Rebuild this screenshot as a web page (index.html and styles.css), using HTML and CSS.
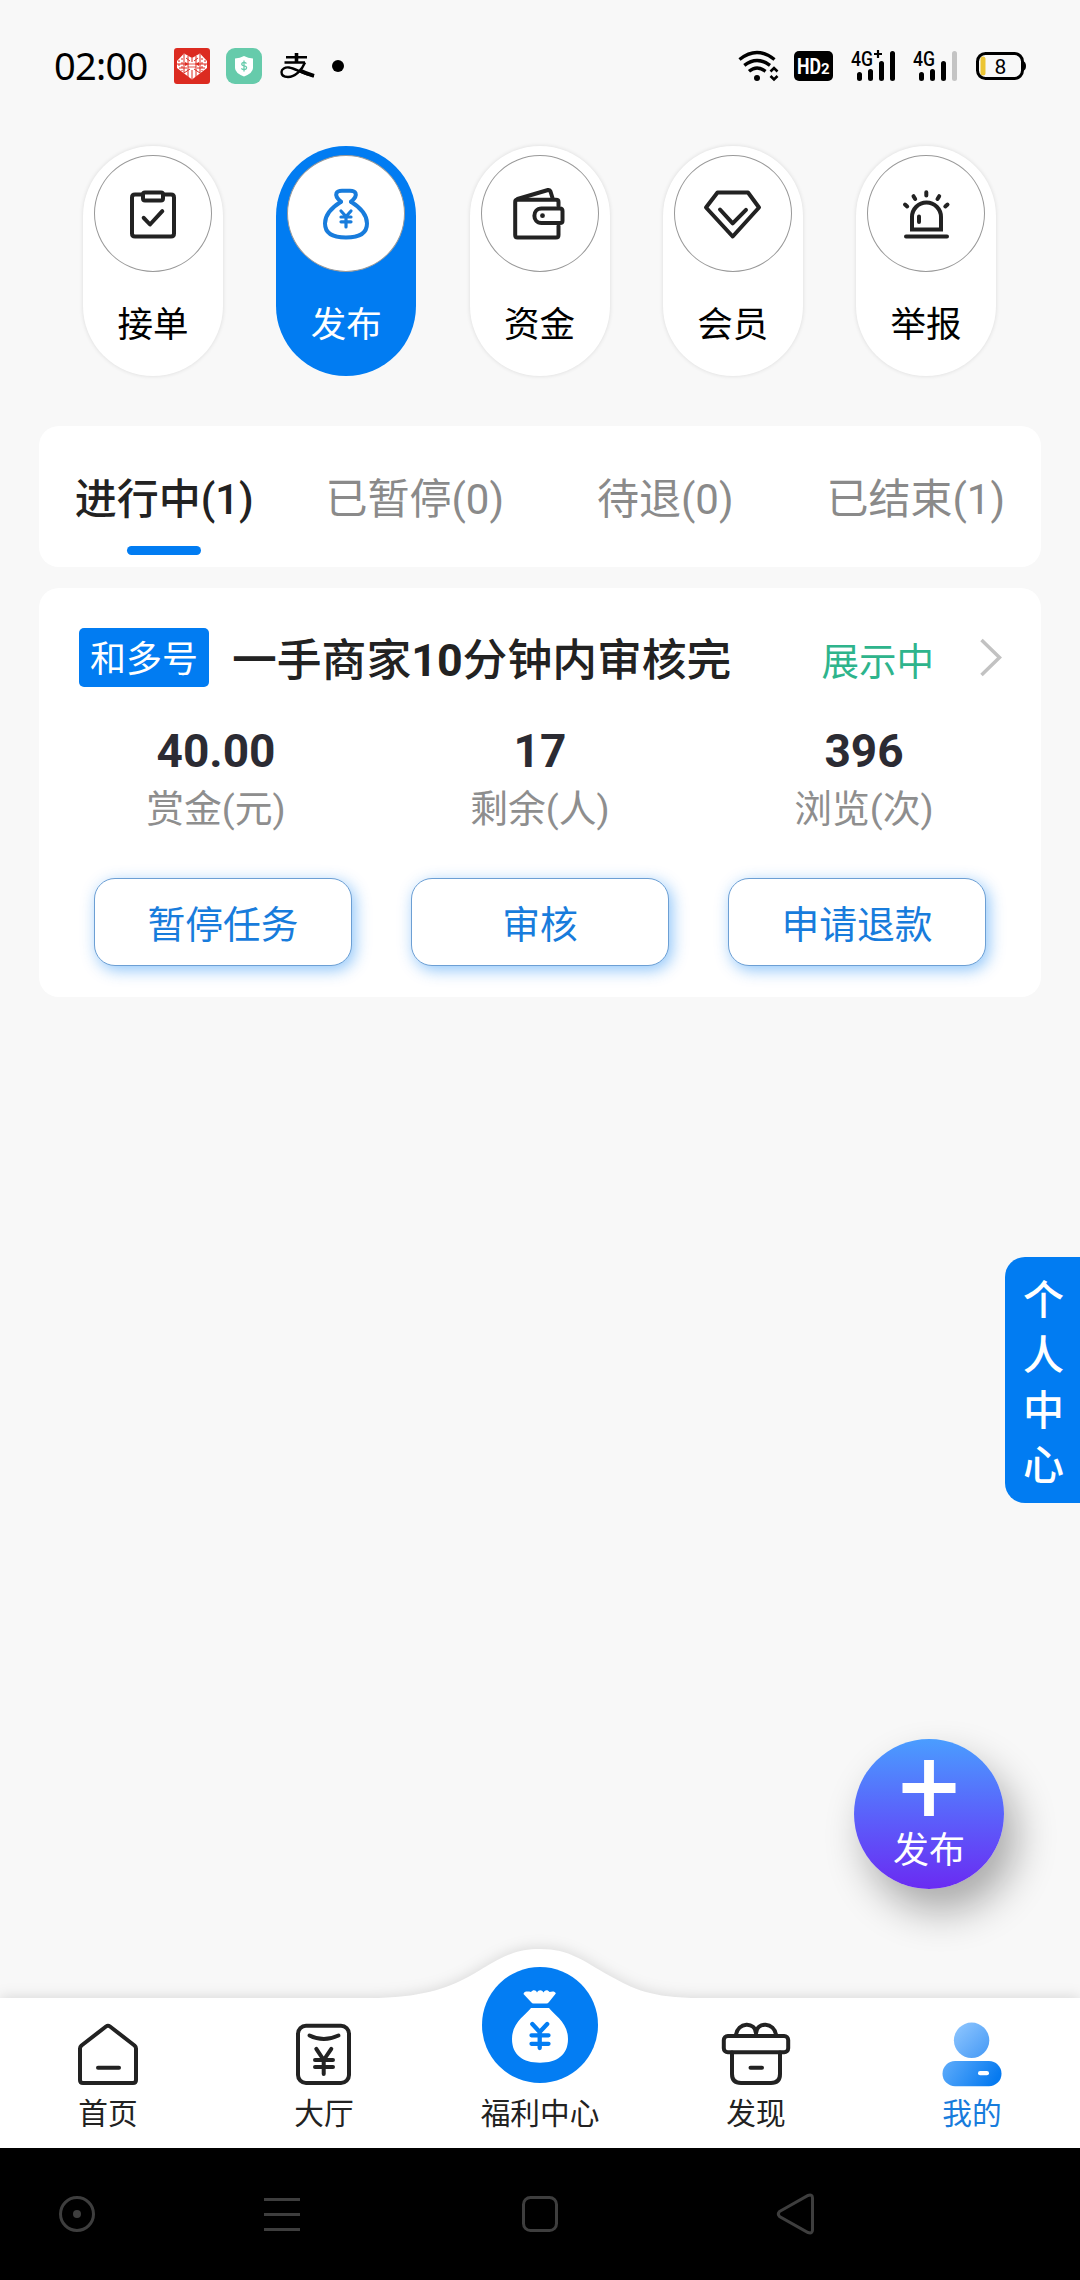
FILE: index.html
```html
<!DOCTYPE html>
<html lang="zh-CN">
<head>
<meta charset="utf-8">
<title>我的发布</title>
<link rel="stylesheet" href="styles.css">
</head>
<body>
<div class="screen">
  <header class="status">
    <span class="clock">02:00</span>
    <svg class="app-red" width="36" height="36" viewBox="0 0 36 36">
      <rect width="36" height="36" rx="3" fill="#dc2b21"/>
      <path d="M3 13L10 5.500L18 10L26 5.500L33 13V20L18 31.500L3 20Z" fill="#fff"/>
      <g stroke="#dc2b21" fill="none">
        <path d="M10 6V25M14 8V29M22 8V29M26 6V25M18 10V14M18 22V31" stroke-width="1"/>
        <path d="M5 12V20M31 12V20M8 10V23M28 10V23" stroke-width="1" stroke-dasharray="2 2"/>
        <path d="M3 16H12M24 16H33M5 20H13M23 20H31M10 25L16 21M26 25L20 21M12 10L16 13M24 10L20 13" stroke-width="1"/>
        <path d="M14 16H22M14 19H22" stroke-width=".8"/>
      </g>
      <path d="M11 14l4 2-4 2zM25 14l-4 2 4 2z" fill="#dc2b21"/>
    </svg>
    <svg class="app-green" width="36" height="36" viewBox="0 0 36 36">
      <rect width="36" height="36" rx="9" fill="#66cbab"/>
      <path d="M9 10.500Q14 10 18 8Q22 10 27 10.500V20Q27 25 18 28.500Q9 25 9 20Z" fill="#fff"/>
      <path d="M20.500 15.500Q18 13.500 16 15.200Q15 17.300 18 17.800Q21.500 18.500 20.300 20.800Q18 22.500 15.300 20.500M18 12.500V23.500" fill="none" stroke="#66cbab" stroke-width="1.300"/>
    </svg>
    <svg class="app-pay" width="36" height="32" viewBox="0 0 36 32" fill="none" stroke="#000">
      <path d="M6 7.300H27M4.500 12.500H25" stroke-width="2.500"/>
      <path d="M16.500 3V12.500" stroke-width="3.600"/>
      <path d="M25 12.500C22 20 15 27 8 27C3 27 1.500 24.500 1.500 22C1.500 19 5 17 9 17.500C16 18.500 22 24 34 25.800" stroke-width="2.400"/>
      <path d="M20 20.500Q26 23.500 34 25.800" stroke-width="4"/>
    </svg>
    <span class="dot"></span>
    <svg class="wifi" width="42" height="32" viewBox="0 0 42 32" fill="none" stroke="#000">
      <path d="M1.500 9.500Q19 -4.500 36.500 9.500" stroke-width="3.400"/>
      <path d="M6.300 15.300Q19 5.500 32 15.300M11 21.300Q19 14.500 27.500 21.300" stroke-width="3.400"/>
      <circle cx="19" cy="28" r="3" fill="#000" stroke="none"/>
      <path d="M32.500 21.500L36 18L39.500 21.500M32.500 26L36 29.500L39.500 26" stroke-width="2.600"/>
    </svg>
    <svg class="hd" width="40" height="32" viewBox="0 0 40 32">
      <rect y="1" width="39" height="30" rx="5"/>
      <text x="3" y="24" font-size="22" textLength="24" lengthAdjust="spacingAndGlyphs">HD</text>
      <text x="27" y="24" font-size="15">2</text>
    </svg>
    <svg class="signal" width="46" height="44" viewBox="0 -6 46 44">
      <text x="0" y="15.500" textLength="22" lengthAdjust="spacingAndGlyphs">4G</text>
      <path d="M23 4H31M27 0V8" stroke="#000" stroke-width="2.200"/>
      <path d="M8.500 24.500V28.500M19.500 21.500V28.500M30.500 13.500V28.500M41.500 3.500V28.500" stroke="#000" stroke-width="5" stroke-linecap="round"/>
    </svg>
    <svg class="signal signal-2" width="46" height="44" viewBox="0 -6 46 44">
      <text x="0" y="15.500" textLength="22" lengthAdjust="spacingAndGlyphs">4G</text>
      <path d="M8.500 24.500V28.500M19.500 21.500V28.500M30.500 13.500V28.500" stroke="#000" stroke-width="5" stroke-linecap="round"/>
      <path d="M41.500 3.500V28.500" stroke="#c4c4c4" stroke-width="5" stroke-linecap="round"/>
    </svg>
    <svg class="battery" width="50" height="32" viewBox="0 0 50 32">
      <rect x="1.500" y="3.500" width="45" height="25" rx="8" fill="none" stroke="#000" stroke-width="3"/>
      <path d="M47 11Q50 12 50 16Q50 20 47 21Z"/>
      <rect x="4.500" y="6.500" width="5" height="19" rx="2.500" fill="#ecc534"/>
      <text x="24.500" y="23.500" text-anchor="middle">8</text>
    </svg>
  </header>

  <nav class="pills">
    <a class="pill">
      <span class="pill-icon"><svg class="icon" width="60" height="60" viewBox="0 0 60 60">
        <path d="M19 10.500H12Q9 10.500 9 13.500V49.500Q9 52.500 12 52.500H48Q51 52.500 51 49.500V13.500Q51 10.500 48 10.500H41"/>
        <rect x="20" y="8.500" width="20" height="8" rx="2"/>
        <path d="M20.700 33.800L27 40.500L39.300 27.200"/></svg></span>
      <span class="pill-text">接单</span>
    </a>
    <a class="pill active">
      <span class="pill-icon"><svg class="icon" width="60" height="60" viewBox="0 0 60 60">
        <path d="M25 17.800C15 24 9 32 9 39.500C9 49 17 53.500 30 53.500C43 53.500 51 49 51 39.500C51 32 45 24 35 17.800"/>
        <path d="M25 17.800C21 14.500 19.500 11.500 20.500 9Q21.500 6.700 26 6.700H34Q38.500 6.700 39.500 9C40.500 11.500 39 14.500 35 17.800"/>
        <path d="M25 27L30 32.500L35 27M30 32.500V43M25 33H35M25 37.800H35" stroke-width="3.200"/></svg></span>
      <span class="pill-text">发布</span>
    </a>
    <a class="pill">
      <span class="pill-icon"><svg class="icon" width="60" height="60" viewBox="0 0 60 60">
        <path d="M48.500 22V18Q48.500 15.800 46 15.800H7.500Q5.200 15.800 5.200 18V51Q5.200 53.500 7.500 53.500H46Q48.500 53.500 48.500 51V42"/>
        <path d="M31.500 24.500H50Q52.500 24.500 52.500 27V37Q52.500 39 50 39H31.500C22 39 22 24.500 31.500 24.500Z"/>
        <path d="M7.500 15L38 6Q39.800 5.600 40.500 7.500L42.500 14"/>
        <circle cx="32.500" cy="31.700" r="2.400" fill="#222" stroke="none"/></svg></span>
      <span class="pill-text">资金</span>
    </a>
    <a class="pill">
      <span class="pill-icon"><svg class="icon" width="60" height="60" viewBox="0 0 60 60">
        <path d="M14.500 8.500H45L56 23.500L29.700 52.500L3 23.500Z"/>
        <path d="M17 25.500L29.700 39.300L43 25.800"/></svg></span>
      <span class="pill-text">会员</span>
    </a>
    <a class="pill">
      <span class="pill-icon"><svg class="icon" width="60" height="60" viewBox="0 0 60 60">
        <path d="M16 45.500V33A14.500 14.500 0 0 1 45 33V45.500Z" stroke-linejoin="miter"/>
        <path d="M10 52.500H51M23 32.500V38M30.300 8.200V11.500M17.500 12.200L19.200 15M43.200 12.200L41.500 15M9 20.500L11.200 22.500M51.500 20.500L49.300 22.500"/></svg></span>
      <span class="pill-text">举报</span>
    </a>
  </nav>

  <section class="tabs">
    <a class="tab current">进行中(1)</a>
    <a class="tab">已暂停(0)</a>
    <a class="tab">待退(0)</a>
    <a class="tab">已结束(1)</a>
  </section>

  <article class="task">
    <div class="task-head">
      <span class="tag">和多号</span>
      <h2 class="title">一手商家<b>10</b>分钟内审核完</h2>
      <span class="state">展示中</span>
      <svg class="chevron" width="22" height="40" viewBox="0 0 22 40"><path d="M1.500 2L19.500 19.500L1.500 37" fill="none" stroke="#c2c2c2" stroke-width="3.500"/></svg>
    </div>
    <div class="stats">
      <div class="stat"><b>40.00</b><span>赏金(元)</span></div>
      <div class="stat"><b>17</b><span>剩余(人)</span></div>
      <div class="stat"><b>396</b><span>浏览(次)</span></div>
    </div>
    <div class="actions">
      <button class="action">暂停任务</button>
      <button class="action">审核</button>
      <button class="action">申请退款</button>
    </div>
  </article>

  <aside class="side">个人中心</aside>

  <a class="fab">
    <svg width="54" height="57" viewBox="0 0 54 57"><path d="M0.500 28H53.500M27 0V56" stroke="#fff" stroke-width="9.800"/></svg>
    <span>发布</span>
  </a>

  <footer class="tabbar">
    <svg class="tabbar-shape" width="1080" height="230" viewBox="0 0 1080 230">
      <path d="M-20 80H370C420 80 447 70.500 470 58C497 43 510 31 540 31C570 31 583 43 610 58C633 70.500 650 80 700 80H1100V260H-20Z" fill="#fff"/>
    </svg>
    <a class="item"><svg class="icon" width="72" height="72" viewBox="0 0 72 72">
      <path d="M34 8.500Q36 7 38 8.500L62.500 27.500Q64 28.800 64 30.500V62Q64 65 61 65H11Q8 65 8 62V30.500Q8 28.800 9.500 27.500Z"/><path d="M26 49.700H47"/></svg>
      <span>首页</span></a>
    <a class="item"><svg class="icon" width="72" height="72" viewBox="0 0 72 72">
      <rect x="10" y="7.700" width="51" height="57.300" rx="8"/><path d="M21.500 17.500Q35.700 24.500 50.500 17.500"/>
      <path d="M28.300 30.800L35.700 42L43.300 30.800M35.700 42V56M27 42H45M27 49H45"/></svg>
      <span>大厅</span></a>
    <a class="item center"><svg width="116" height="116" viewBox="0 0 116 116">
      <circle cx="58" cy="58" r="58" fill="#037df3"/>
      <path d="M41.500 27C42 24 46 24.500 49 25C51 22.500 54 23 55 25.500C56.500 22.500 60 22.500 61.500 25.500C63 23 65.500 22.500 67.500 25C70 24.500 73 24 73.800 26.500L67 35Q65.800 36.500 64.500 36.500H51.500Q50.200 36.500 49 35Z" fill="#fff"/>
      <path d="M49 41H67C72 48 86 55 86 72C86 88 75 95.700 58 95.700C41 95.700 30 88 30 72C30 55 44 48 49 41Z" fill="#fff"/>
      <path d="M50.300 57L57.700 65L65.200 57M57.700 65V81M49.500 68.300H66.500M49.500 76.800H66.500" fill="none" stroke="#037df3" stroke-width="4.300" stroke-linecap="round" stroke-linejoin="round"/></svg>
      <span>福利中心</span></a>
    <a class="item"><svg class="icon" width="72" height="72" viewBox="0 0 72 72">
      <rect x="3.800" y="18" width="64.400" height="16.300" rx="4"/><path d="M12 34.500V56Q12 65 21 65H51Q60 65 60 56V34.500M30.500 49.700H42M16 17.500C17 3.500 36 3.500 36 15.500C36 3.500 55 3.500 56 17.500"/></svg>
      <span>发现</span></a>
    <a class="item mine"><svg width="72" height="72" viewBox="0 0 72 72">
      <defs>
        <linearGradient id="head" x1="0" y1="0" x2="1" y2="1"><stop offset="0" stop-color="#92c8ff"/><stop offset="1" stop-color="#4398f5"/></linearGradient>
        <linearGradient id="torso" gradientUnits="userSpaceOnUse" x1="14" y1="40" x2="56" y2="68"><stop offset="0" stop-color="#58a8fa"/><stop offset="1" stop-color="#067af0"/></linearGradient>
      </defs>
      <circle cx="35.600" cy="22.300" r="17.700" fill="url(#head)"/><rect x="6.500" y="43" width="59" height="25.300" rx="12.600" fill="url(#torso)"/><rect x="42" y="53" width="11" height="4.300" rx="2.100" fill="#fff"/></svg>
      <span>我的</span></a>
  </footer>

  <div class="system">
    <svg width="1080" height="132" viewBox="0 0 1080 132" fill="none" stroke="#3e3e3e" stroke-width="3">
      <circle cx="77" cy="66" r="16.500"/><circle cx="77" cy="66" r="4" fill="#3e3e3e" stroke="none"/>
      <path d="M264 51.500H300M264 66.500H300M264 81.500H300"/>
      <rect x="523.500" y="49.500" width="33" height="33" rx="7"/>
      <path d="M779.500 63.500L808 47.500Q812.500 46 812.500 50V82Q812.500 86 808 84.500L779.500 68.500Q777 66 779.500 63.500Z"/>
    </svg>
  </div>
</div>
</body>
</html>
```
FILE: styles.css
```css
* { box-sizing: border-box; }
body { margin: 0; background: #f8f8f8; font-family: Roboto, "Noto Sans CJK SC", sans-serif; color: #222; }
svg { display: block; flex: none; }

.screen { position: relative; display: flex; flex-direction: column; width: 1080px; height: 2280px; overflow: hidden; }

.status { display: flex; align-items: center; height: 132px; padding: 0 54px; color: #000; }
.clock { width: 120px; padding-bottom: 2px; font: 400 38px/42px "Noto Sans", sans-serif; letter-spacing: -0.7px; }
.app-green { margin-left: 16px; }
.app-pay { margin-left: 18px; }
.dot { width: 12px; height: 12px; margin-left: 16px; border-radius: 50%; background: #000; }
.wifi { margin-left: auto; }
.hd { margin-left: 14px; fill: #000; }
.hd text { fill: #fff; font-weight: 700; }
.signal { margin-left: 17px; font-size: 20px; font-weight: 500; }
.signal-2 { margin-left: 16px; }
.battery { margin-left: 17px; font-size: 21px; }

.pills { display: flex; justify-content: space-between; padding: 14px 84px 0 83px; }
.pill { display: flex; flex-direction: column; align-items: center; width: 140px; height: 230px; padding-top: 9px; border-radius: 70px; background: #fff; box-shadow: 0 0 4px rgba(0, 0, 0, 0.12); color: #000; }
.pill-icon { display: flex; align-items: center; justify-content: center; width: 118px; height: 117px; border: 1px solid #999; border-radius: 50%; background: #fff; }
.pill-text { margin-top: 33px; font-size: 35.5px; line-height: 40px; }
.pill.active { background: #017cf2; color: #fff; box-shadow: none; }
.icon { fill: none; stroke: #222; stroke-width: 4; stroke-linecap: round; stroke-linejoin: round; }
.active .icon { stroke: #187cdc; }

.tabs { display: flex; height: 141px; margin: 50px 39px 0; border-radius: 20px; background: #fff; }
.tab { flex: 1; display: flex; flex-direction: column; align-items: center; padding-top: 49px; font-size: 42px; line-height: 50px; color: #8a8a8a; }
.tab.current { font-weight: 500; color: #222; }
.tab.current::after { content: ""; width: 74px; height: 9px; margin-top: 21px; border-radius: 5px; background: #017cf2; }

.task { height: 409px; margin: 21px 39px 0; border-radius: 20px; background: #fff; padding: 40px 15px 0; }
.task-head { display: flex; align-items: center; height: 59px; padding: 0 24px 0 25px; }
.tag { width: 130px; height: 59px; border-radius: 5px; background: #017cf2; color: #fff; font-size: 36px; line-height: 65px; text-align: center; }
.title { margin: 7px 0 0 23px; font-size: 44.800px; line-height: 56px; font-weight: 500; white-space: nowrap; }
.title b { font-weight: 700; }
.state { margin: 8px 0 0 auto; font-size: 37.500px; line-height: 48px; color: #2eb48c; }
.chevron { margin-left: 46px; }
.stats { display: flex; height: 191px; padding-top: 36px; }
.stat { flex: 1; display: flex; flex-direction: column; align-items: center; }
.stat b { font-size: 46px; line-height: 56px; color: #2b2b33; }
.stat span { font-size: 37.800px; line-height: 60px; color: #8e8e8e; }
.actions { display: flex; justify-content: space-between; padding: 0 40px; }
.action { width: 258px; height: 88px; padding: 0 0 1px; border: 1px solid #6c9fd4; border-radius: 21px; background: #fff; box-shadow: 3px 4px 16px rgba(1, 124, 242, 0.45); font: 37.800px "Noto Sans CJK SC", sans-serif; color: #187cdc; }

.side { position: absolute; right: 0; top: 1257px; width: 75px; height: 246px; padding: 17px 16px 0 18px; border-radius: 20px 0 0 20px; background: #017cf2; color: #fff; font-size: 41px; line-height: 55px; font-weight: 500; word-break: break-all; }
.fab { position: absolute; left: 854px; top: 1739px; display: flex; flex-direction: column; align-items: center; width: 150px; height: 150px; padding-top: 21px; border-radius: 50%; background: linear-gradient(#4a9dff, #5c5cfa 55%, #6a2bf2); box-shadow: 12px 22px 40px rgba(0, 0, 0, 0.32); color: #fff; font-size: 36px; line-height: 40px; }
.fab span { margin-top: 14px; }

.tabbar { position: relative; display: flex; align-items: flex-end; height: 150px; margin-top: auto; padding-bottom: 15px; }
.tabbar-shape { position: absolute; left: 0; bottom: 0; filter: drop-shadow(0 -1px 7px rgba(0, 0, 0, 0.13)); }
.item { position: relative; flex: 1; display: flex; flex-direction: column; align-items: center; font-size: 29.700px; line-height: 38px; }
.item svg { margin-bottom: 5px; }
.item.center svg { margin-bottom: 12px; }
.item.mine { color: #187cdc; }

.system { flex: none; height: 132px; background: #000; }
```
